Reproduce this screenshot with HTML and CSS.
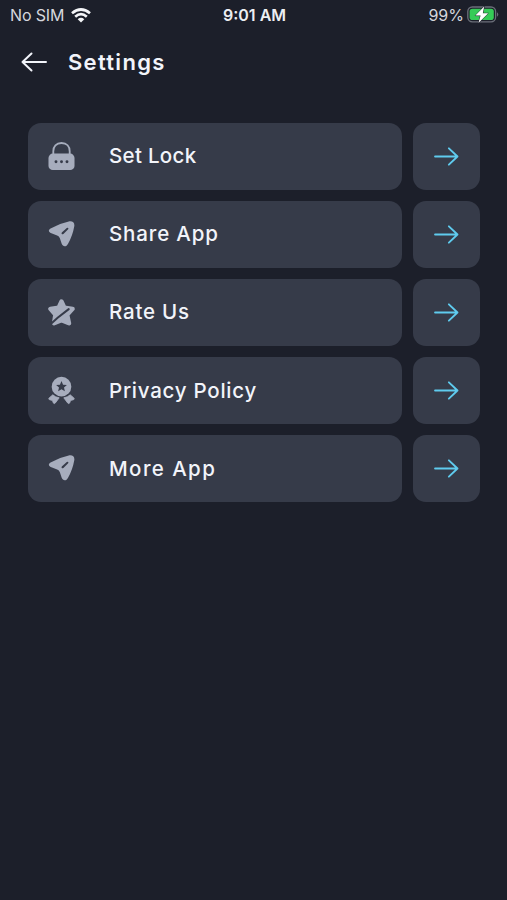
FILE: index.html
```html
<!DOCTYPE html>
<html lang="en">
<head>
<meta charset="utf-8">
<title>Settings</title>
<link rel="stylesheet" href="styles.css">
</head>
<body>
<svg class="defs" width="0" height="0" aria-hidden="true">
  <symbol id="arrow" viewBox="0 0 28 22"><path d="M2 11H25.500M16.500 2.500L25.500 11L16.500 19.500" fill="none" stroke="currentColor" stroke-width="2" stroke-linecap="round" stroke-linejoin="round"/></symbol>
  <symbol id="send" viewBox="0 0 28 28"><path fill="currentColor" fill-rule="evenodd" d="M3.200 8.500Q12 3.500 21.500 1.500C25.500 .8 27.700 2.700 27.300 6.200Q25.500 16.500 20.800 24.500C19.200 28 15.500 28 14.200 24.700L12.300 19Q11.600 16.800 9.500 16L3.500 13.600C.1 12 .1 10.200 3.200 8.500ZM14.300 13L19.500 8.200Q21.700 7.300 20.900 9.500L16 14.400Q13.400 15.400 14.300 13Z"/></symbol>
</svg>
<header class="status">
  <div class="carrier"><span>No SIM</span>
    <svg width="20" height="15" viewBox="0 0 20 15" fill="none" stroke="#f4f5f8" stroke-width="2.700"><path d="M1 5.300Q10-2.300 19 5.300M4.200 8.700Q10 3.600 15.800 8.700"/><path d="M6.700 11.300Q10 8.400 13.300 11.300L10 14.600Z" fill="#f4f5f8" stroke="none"/></svg>
  </div>
  <div class="time">9:01 AM</div>
  <div class="power"><span>99%</span>
    <svg width="32" height="18" viewBox="0 0 32 18"><rect x=".8" y="1" width="27.800" height="14.800" rx="4.500" fill="none" stroke="#6b6f79" stroke-width="1.300"/><rect x="2.600" y="2.800" width="24.200" height="11.200" rx="2.800" fill="#35cb57"/><path d="M30 6.200Q32.500 8.400 30 10.700Z" fill="#6b6f79"/><path d="M17.200 .4L8.300 9.600H13.600L11.400 17L21.200 7.300H15.800Z" fill="#fff" stroke="#1c1f2a" stroke-width="1" paint-order="stroke"/></svg>
  </div>
</header>
<nav class="title-bar">
  <svg class="back" width="28" height="22"><use href="#arrow"/></svg>
  <h1>Settings</h1>
</nav>
<main class="list">
  <div class="row">
    <div class="card"><svg class="icon" viewBox="0 0 28 30"><path d="M5.500 13V9.500C5.500 4.500 8.500 1 14 1S22.500 4.500 22.500 9.500V13" fill="none" stroke="currentColor" stroke-width="1.900"/><rect x=".5" y="12" width="27" height="17" rx="4.500" fill="currentColor"/><g fill="#363b49"><circle cx="8.300" cy="20.500" r="1.500"/><circle cx="14" cy="20.500" r="1.500"/><circle cx="19.700" cy="20.500" r="1.500"/></g></svg><span class="label set">Set Lock</span></div>
    <div class="go"><svg width="27" height="21"><use href="#arrow"/></svg></div>
  </div>
  <div class="row">
    <div class="card"><svg class="icon" viewBox="0 0 28 30"><use href="#send" x="0" y="0" width="28" height="28"/></svg><span class="label share">Share App</span></div>
    <div class="go"><svg width="27" height="21"><use href="#arrow"/></svg></div>
  </div>
  <div class="row">
    <div class="card"><svg class="icon" viewBox="0 0 28 30"><path d="M14 3.500L17 10L25.500 11.200L19.900 17.300L21.800 26.200L14 23L6.200 26.200L7.600 17.300L2.500 11.200L11 10Z" fill="currentColor" stroke="currentColor" stroke-width="4.500" stroke-linejoin="round"/><path d="M4 26L10 20.500L21.500 11.500" fill="none" stroke="#363b49" stroke-width="2.100" stroke-linecap="round"/></svg><span class="label rate">Rate Us</span></div>
    <div class="go"><svg width="27" height="21"><use href="#arrow"/></svg></div>
  </div>
  <div class="row">
    <div class="card"><svg class="icon" viewBox="0 0 28 30"><circle cx="14" cy="11" r="10.200" fill="currentColor"/><path d="M14 5.200L15.600 9L19.600 9.300L16.600 11.900L17.500 15.800L14 13.700L10.500 15.800L11.400 11.900L8.400 9.300L12.400 9Z" fill="#363b49"/><path d="M5 19.500L1.200 22.700Q.1 24.200 1.800 24.600L4.600 25.300L5.600 28Q6.500 29.200 7.600 27.900L11.600 22.600Q7.500 22 5 19.500ZM23 19.500L26.800 22.700Q27.900 24.200 26.200 24.600L23.400 25.300L22.400 28Q21.500 29.200 20.400 27.900L16.400 22.600Q20.500 22 23 19.500Z" fill="currentColor" stroke="currentColor" stroke-width=".9" stroke-linejoin="round"/></svg><span class="label privacy">Privacy Policy</span></div>
    <div class="go"><svg width="27" height="21"><use href="#arrow"/></svg></div>
  </div>
  <div class="row">
    <div class="card"><svg class="icon" viewBox="0 0 28 30"><use href="#send" x="0" y="0" width="28" height="28"/></svg><span class="label more">More App</span></div>
    <div class="go"><svg width="27" height="21"><use href="#arrow"/></svg></div>
  </div>
</main>
</body>
</html>
```
FILE: styles.css
```css
* { box-sizing: border-box; }
body {
  margin: 0;
  min-height: 900px;
  background: #1c1f2a;
  color: #f2f4fa;
  font-family: Inter, "Liberation Sans", sans-serif;
}
svg { display: block; flex: none; }
.defs { position: absolute; }
.status {
  display: grid;
  grid-template-columns: 1fr auto 1fr;
  align-items: center;
  height: 30px;
  padding: 0 8px 0 10px;
  font-size: 16px;
  line-height: 20px;
  color: #d5d7dd;
}
.carrier, .power { display: flex; align-items: center; }
.carrier { gap: 7px; letter-spacing: -0.150px; }
.power { justify-content: flex-end; gap: 3px; }
.time { color: #eceef2; font-weight: 600; }
.title-bar {
  display: flex;
  align-items: center;
  height: 64px;
  padding-left: 20px;
}
.back { transform: scaleX(-1); color: #f2f4fa; }
h1 {
  margin: 0 0 0 20px;
  font-size: 22px;
  line-height: 28px;
  font-weight: 600;
  letter-spacing: 1.300px;
}
.list {
  display: flex;
  flex-direction: column;
  gap: 11.2px;
  padding: 28.500px 27px 0 28px;
}
.row { display: flex; gap: 11px; height: 67px; }
.card, .go {
  display: flex;
  align-items: center;
  background: #363b49;
  border-radius: 13px;
}
.card { flex: 1; padding-left: 20px; }
.go { width: 67.500px; justify-content: center; color: #5fcbee; }
.icon { width: 27px; height: 29px; color: #a7adbd; }
.label {
  margin-left: 34px;
  font-size: 20.500px;
  line-height: 26px;
  font-weight: 450;
  white-space: nowrap;
}
.set { letter-spacing: 0.300px; }
.share { letter-spacing: 0.850px; }
.rate { letter-spacing: 0.800px; }
.privacy { letter-spacing: 0.750px; }
.more { letter-spacing: 1.400px; }
```
